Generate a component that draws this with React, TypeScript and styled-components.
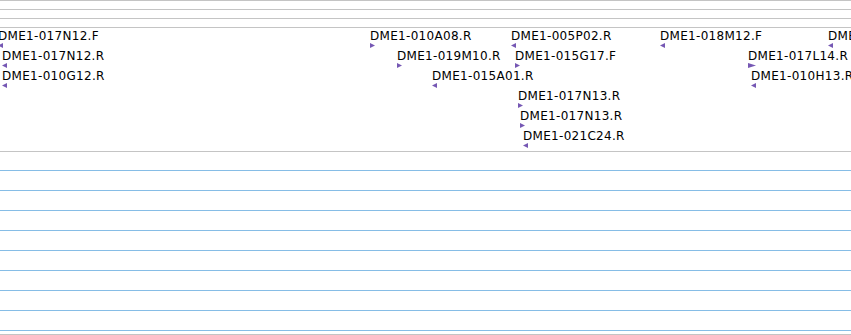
import * as React from 'react';
import styled, { createGlobalStyle } from 'styled-components';

const GlobalStyle = createGlobalStyle`
  html, body {
    margin: 0;
    padding: 0;
    background: #ffffff;
  }
  body {
    font-family: 'DejaVu Sans', 'Liberation Sans', sans-serif;
  }
`;

const rows = [
  [
    { name: 'DME1-017N12.F', x: -2, dir: 'left' },
    { name: 'DME1-010A08.R', x: 370, dir: 'right' },
    { name: 'DME1-005P02.R', x: 511, dir: 'left' },
    { name: 'DME1-018M12.F', x: 660, dir: 'left' },
    { name: 'DME1-003K11.R', x: 828, dir: 'left' },
  ],
  [
    { name: 'DME1-017N12.R', x: 2, dir: 'left' },
    { name: 'DME1-019M10.R', x: 397, dir: 'right' },
    { name: 'DME1-015G17.F', x: 515, dir: 'right' },
    { name: 'DME1-017L14.R', x: 748, dir: 'right', wide: true },
  ],
  [
    { name: 'DME1-010G12.R', x: 2, dir: 'left' },
    { name: 'DME1-015A01.R', x: 432, dir: 'left' },
    { name: 'DME1-010H13.R', x: 751, dir: 'left' },
  ],
  [{ name: 'DME1-017N13.R', x: 518, dir: 'right' }],
  [{ name: 'DME1-017N13.R', x: 520, dir: 'right' }],
  [{ name: 'DME1-021C24.R', x: 523, dir: 'left' }],
];

const Page = styled.div`
  width: 851px;
  height: 335px;
  overflow: hidden;
  display: flex;
  flex-direction: column;
`;

const Stripe = styled.div`
  height: 8px;
  border-top: 1px solid #c4c4c4;
`;

const Track = styled.div`
  position: relative;
  height: 123px;
  border-top: 1px solid #c4c4c4;
  overflow: hidden;
  display: flex;
  flex-direction: column;
`;

const Row = styled.div`
  position: relative;
  height: 20px;
  flex: none;
`;

const Feature = styled.div`
  position: absolute;
  top: 1px;
  display: flex;
  flex-direction: column;
  align-items: flex-start;
`;

const Label = styled.span`
  font-size: 12px;
  line-height: 14px;
  letter-spacing: 0.3px;
  color: #000;
  white-space: nowrap;
`;

const Arrow = styled.svg`
  display: block;
`;

const Grid = styled.div`
  border-top: 1px solid #c4c4c4;
  padding-top: 18px;
  display: flex;
  flex-direction: column;
`;

const GridLine = styled.div`
  height: ${({ $last }) => ($last ? 3 : 19)}px;
  border-top: 1px solid #86bde6;
`;

const BottomRule = styled.div`
  border-top: 1px solid #c4c4c4;
`;

const Glyph = ({ dir, wide }) => {
  const w = wide ? 8 : 5;
  const points = dir === 'right' ? `0,0 ${w},2.5 0,5` : `${w},0 0,2.5 ${w},5`;
  return (
    <Arrow width={w} height={5} viewBox={`0 0 ${w} 5`}>
      <polygon points={points} fill="#7658b4" />
    </Arrow>
  );
};

export default function App() {
  return (
    <Page>
      <GlobalStyle />
      <Stripe />
      <Stripe />
      <Stripe />
      <Track>
        {rows.map((row, i) => (
          <Row key={i}>
            {row.map((f) => (
              <Feature key={f.name + f.x} style={{ left: f.x }}>
                <Label>{f.name}</Label>
                <Glyph dir={f.dir} wide={f.wide} />
              </Feature>
            ))}
          </Row>
        ))}
      </Track>
      <Grid>
        {Array.from({ length: 9 }).map((_, i) => (
          <GridLine key={i} $last={i === 8} />
        ))}
        <BottomRule />
      </Grid>
    </Page>
  );
}
